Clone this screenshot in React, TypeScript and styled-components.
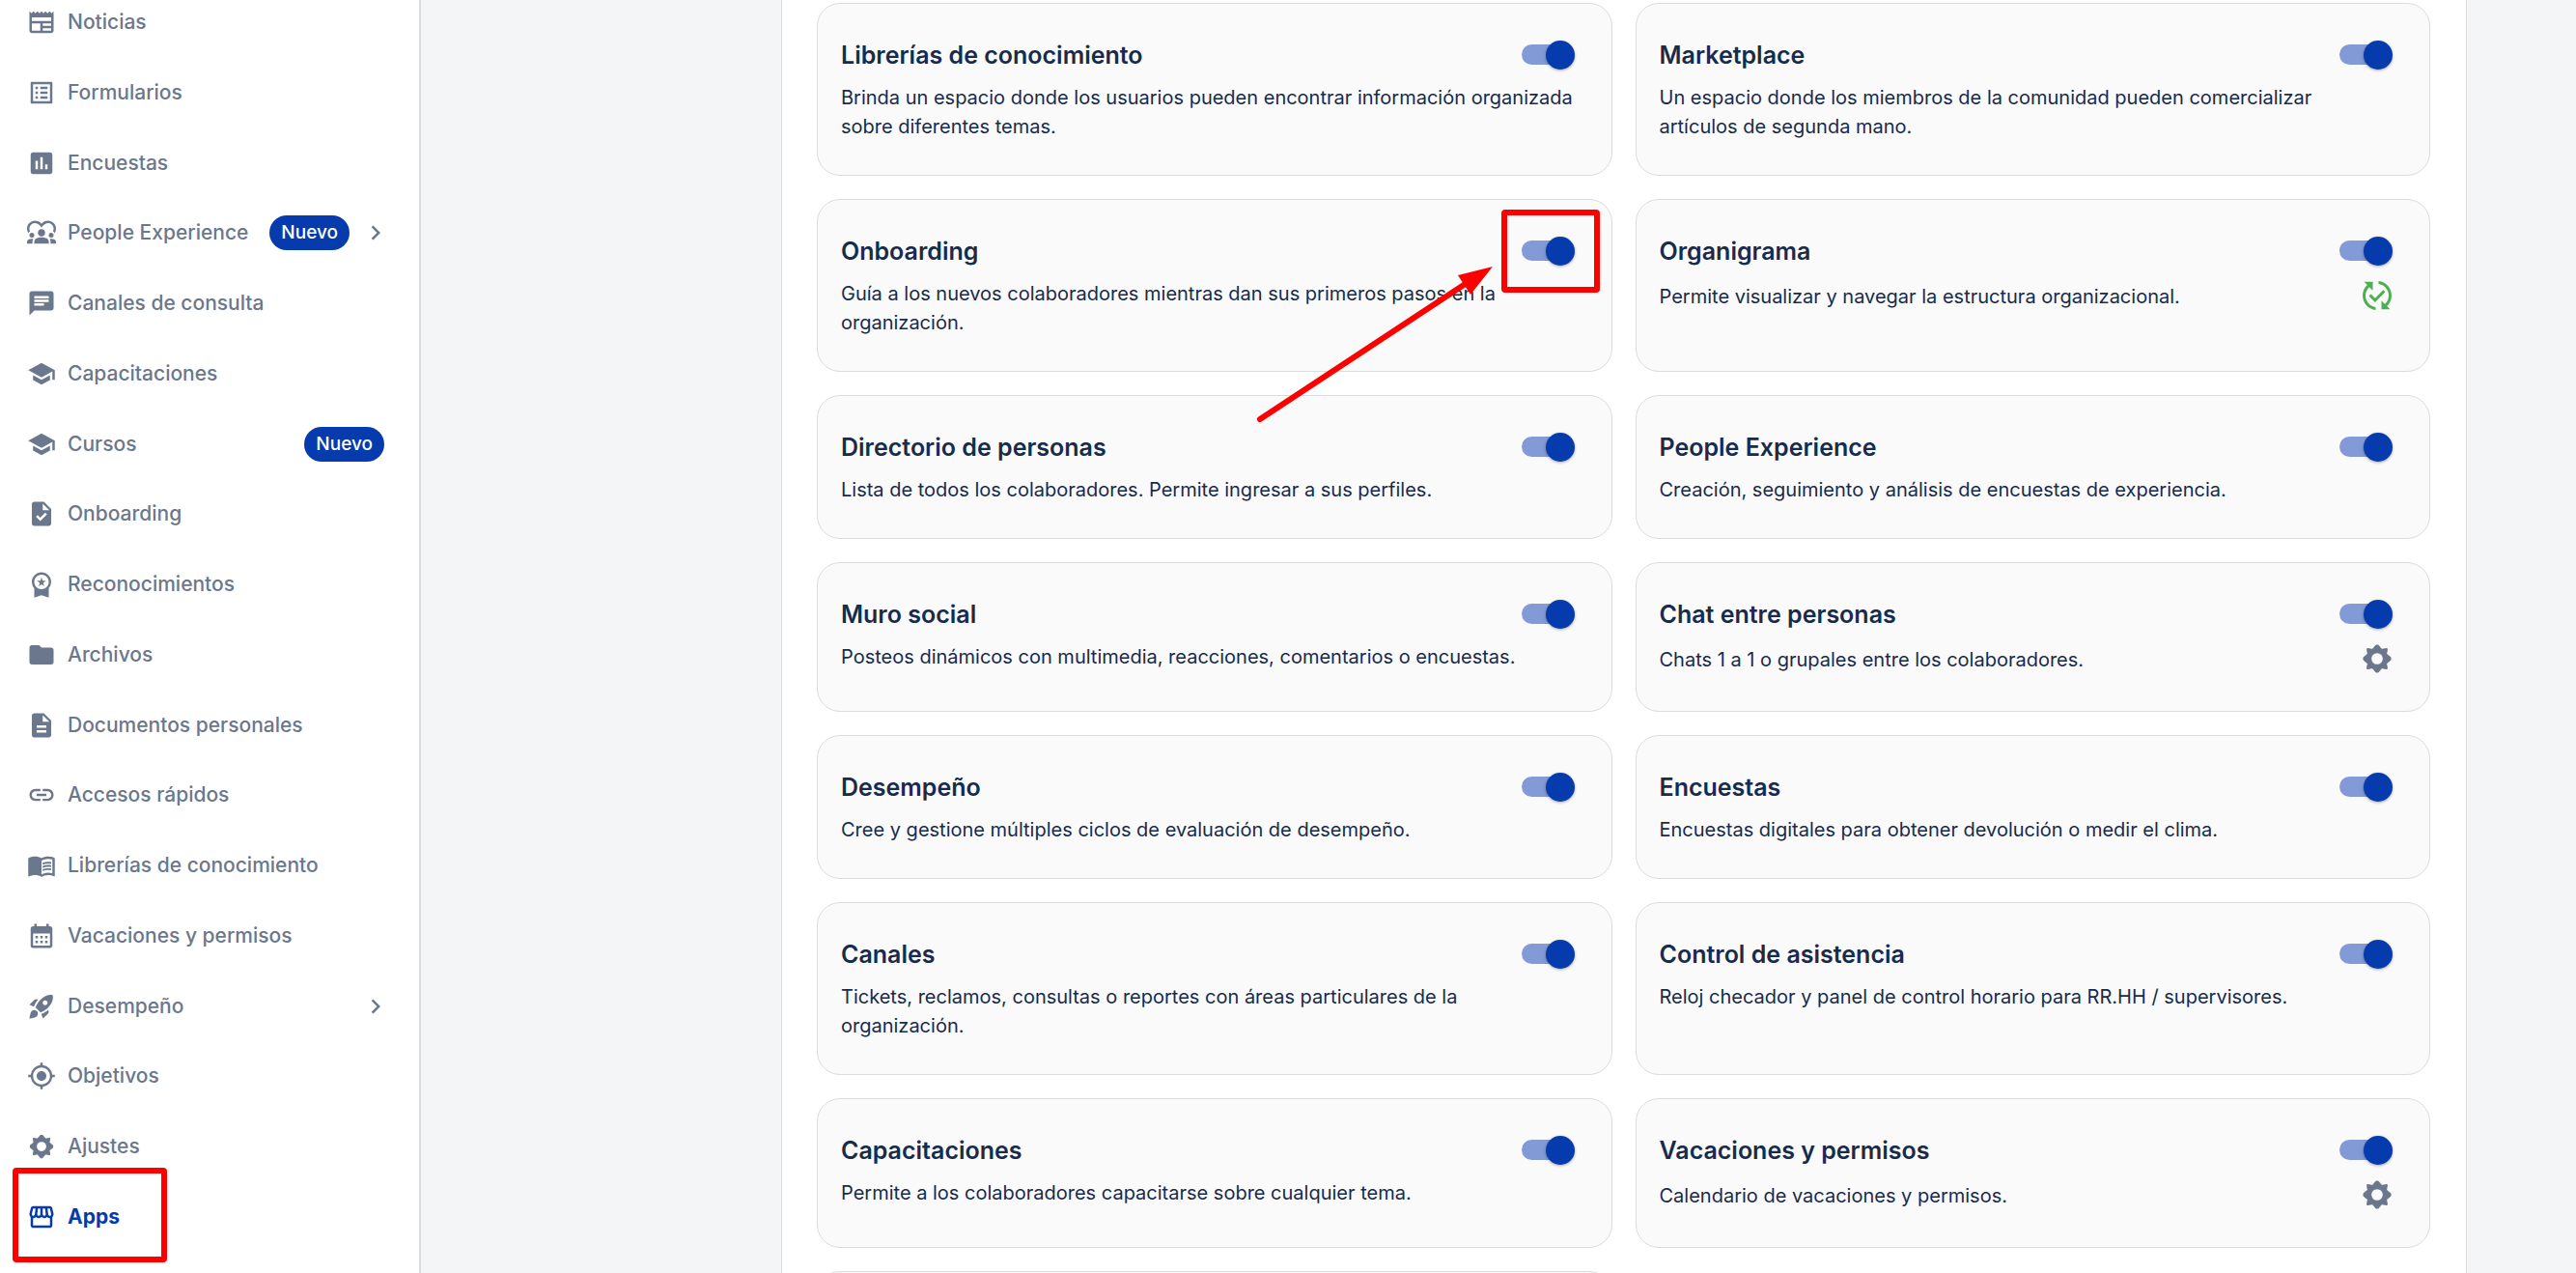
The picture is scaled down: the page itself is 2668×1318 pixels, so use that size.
import React from 'react';
import styled, { createGlobalStyle } from 'styled-components';
import type { IconType } from 'react-icons';
import {
  MdAssessment,
  MdCalendarMonth,
  MdChat,
  MdChevronRight,
  MdDescription,
  MdDiversity1,
  MdFolder,
  MdLink,
  MdListAlt,
  MdMenuBook,
  MdMyLocation,
  MdNewspaper,
  MdPublishedWithChanges,
  MdRocketLaunch,
  MdSchool,
  MdStorefront,
  MdTask,
  MdWorkspacePremium,
} from 'react-icons/md';

const blue = '#053bad';
const slate = '#6b778c';
const navy = '#172b4d';
const line = '#dcdcde';
const red = '#ff0000';

const GlobalStyle = createGlobalStyle`
  *, *::before, *::after { box-sizing: border-box; }
  body {
    margin: 0;
    background: #f4f5f7;
    color: ${navy};
    font-family: Inter, "Liberation Sans", sans-serif;
    overflow: hidden;
  }
`;

const Page = styled.div`
  display: flex;
  height: 100vh;
  overflow: hidden;
`;

const Sidebar = styled.nav`
  flex: none;
  width: 436px;
  height: 100vh;
  background: #fff;
  border-right: 2px solid ${line};
`;

const NavList = styled.ul`
  display: flex;
  flex-direction: column;
  justify-content: space-between;
  height: 100%;
  margin: 0;
  padding: 5px 0 40px;
  list-style: none;
`;

const NavLink = styled.a<{ $active?: boolean; $menu?: boolean }>`
  position: relative;
  display: flex;
  align-items: center;
  gap: 12px;
  height: 36px;
  padding: 0 ${(p) => (p.$menu ? 30 : 36)}px 0 28px;
  color: ${(p) => (p.$active ? blue : slate)};
  font-size: 21px;
  font-weight: ${(p) => (p.$active ? 700 : 500)};
  line-height: 30px;
  text-decoration: none;
  white-space: nowrap;

  svg {
    flex: none;
    width: 30px;
    height: 30px;
  }
`;

const NavText = styled.span`
  flex: 1;
`;

const Badge = styled.span`
  padding: 0 12px;
  border-radius: 18px;
  background: ${blue};
  color: #fff;
  font-size: 19px;
  font-weight: 500;
  line-height: 36px;
`;

const NavMark = styled.span`
  position: absolute;
  left: 13px;
  top: -33px;
  width: 160px;
  height: 98px;
  border: 6px solid ${red};
  border-radius: 4px;
`;

const Main = styled.main`
  flex: 1;
  display: flex;
  padding: 0 113px 0 373px;
`;

const Panel = styled.section`
  flex: 1;
  height: max-content;
  padding: 3px 37px 37px 36px;
  background: #fff;
  border: 1px solid ${line};
  border-width: 0 1px;
`;

const CardGrid = styled.div`
  display: grid;
  grid-template-columns: 1fr 1fr;
  gap: 24px;
`;

const Card = styled.article`
  padding: 24px 24px 36px;
  border: 1px solid ${line};
  border-radius: 24px;
  background: #fafafa;
`;

const CardHeader = styled.label`
  position: relative;
  display: flex;
  align-items: center;
  justify-content: space-between;
  height: 57px;
`;

const CardTitle = styled.span`
  font-size: 25px;
  font-weight: 600;
  line-height: 36px;
`;

const Switch = styled.input`
  appearance: none;
  display: grid;
  align-items: center;
  width: 87px;
  height: 57px;
  margin: 0;
  padding: 0 14px 0 18px;

  &::before,
  &::after {
    content: '';
    grid-area: 1 / 1;
  }
  &::before {
    width: 51px;
    height: 21px;
    border-radius: 11px;
    background: #829bd6;
  }
  &::after {
    width: 30px;
    height: 30px;
    border-radius: 50%;
    background: #8c98ab;
    box-shadow: 0 1px 3px rgba(0, 0, 0, 0.35);
  }
  &:checked::after {
    justify-self: end;
    background: ${blue};
  }
`;

const CardBody = styled.div`
  display: flex;
  align-items: center;
  justify-content: space-between;
  font-size: 20px;
  line-height: 30px;
`;

const Description = styled.p`
  margin: 1px 0 -1px;
  padding-right: 12px;
`;

const CardAction = styled.button<{ $tone: string }>`
  display: flex;
  margin: 0 12px 0 0;
  padding: 0;
  border: 0;
  background: none;
  color: ${(p) => p.$tone};

  svg {
    width: 36px;
    height: 36px;
  }
`;

const SwitchMark = styled.span`
  position: absolute;
  right: -12px;
  top: -14px;
  width: 102px;
  height: 86px;
  border: 6px solid ${red};
  border-radius: 4px;
`;

const Arrow = styled.svg`
  position: absolute;
  right: 99px;
  top: 35px;
  z-index: 1;
  overflow: visible;
`;

function GearIcon() {
  return (
    <svg viewBox="-12 -12 24 24" fill="currentColor" aria-hidden="true">
      <path
        fillRule="evenodd"
        stroke="currentColor"
        strokeWidth="1.600"
        strokeLinejoin="round"
        d="M-.5-8.900H.5L3-5.900 6.500-6.500 5.900-3 8.900-.5V.5L5.900 3 6.500 6.500 3 5.900 .5 8.900H-.5L-3 5.900-6.500 6.500-5.900 3-8.900 .5V-.5L-5.900-3-6.500-6.500-3-5.900ZM-4.700 0a4.700 4.700 0 1 0 9.400 0a4.700 4.700 0 1 0-9.400 0Z"
      />
    </svg>
  );
}

type NavItem = {
  label: string;
  icon: IconType | typeof GearIcon;
  badge?: string;
  menu?: boolean;
  active?: boolean;
};

const navItems: NavItem[] = [
  { label: 'Noticias', icon: MdNewspaper },
  { label: 'Formularios', icon: MdListAlt },
  { label: 'Encuestas', icon: MdAssessment },
  { label: 'People Experience', icon: MdDiversity1, badge: 'Nuevo', menu: true },
  { label: 'Canales de consulta', icon: MdChat },
  { label: 'Capacitaciones', icon: MdSchool },
  { label: 'Cursos', icon: MdSchool, badge: 'Nuevo' },
  { label: 'Onboarding', icon: MdTask },
  { label: 'Reconocimientos', icon: MdWorkspacePremium },
  { label: 'Archivos', icon: MdFolder },
  { label: 'Documentos personales', icon: MdDescription },
  { label: 'Accesos rápidos', icon: MdLink },
  { label: 'Librerías de conocimiento', icon: MdMenuBook },
  { label: 'Vacaciones y permisos', icon: MdCalendarMonth },
  { label: 'Desempeño', icon: MdRocketLaunch, menu: true },
  { label: 'Objetivos', icon: MdMyLocation },
  { label: 'Ajustes', icon: GearIcon },
  { label: 'Apps', icon: MdStorefront, active: true },
];

type AppCard = {
  title: string;
  text: string;
  action?: 'synced' | 'settings';
  marked?: boolean;
};

const cards: AppCard[] = [
  { title: 'Librerías de conocimiento', text: 'Brinda un espacio donde los usuarios pueden encontrar información organizada sobre diferentes temas.' },
  { title: 'Marketplace', text: 'Un espacio donde los miembros de la comunidad pueden comercializar artículos de segunda mano.' },
  { title: 'Onboarding', text: 'Guía a los nuevos colaboradores mientras dan sus primeros pasos en la organización.', marked: true },
  { title: 'Organigrama', text: 'Permite visualizar y navegar la estructura organizacional.', action: 'synced' },
  { title: 'Directorio de personas', text: 'Lista de todos los colaboradores. Permite ingresar a sus perfiles.' },
  { title: 'People Experience', text: 'Creación, seguimiento y análisis de encuestas de experiencia.' },
  { title: 'Muro social', text: 'Posteos dinámicos con multimedia, reacciones, comentarios o encuestas.' },
  { title: 'Chat entre personas', text: 'Chats 1 a 1 o grupales entre los colaboradores.', action: 'settings' },
  { title: 'Desempeño', text: 'Cree y gestione múltiples ciclos de evaluación de desempeño.' },
  { title: 'Encuestas', text: 'Encuestas digitales para obtener devolución o medir el clima.' },
  { title: 'Canales', text: 'Tickets, reclamos, consultas o reportes con áreas particulares de la organización.' },
  { title: 'Control de asistencia', text: 'Reloj checador y panel de control horario para RR.HH / supervisores.' },
  { title: 'Capacitaciones', text: 'Permite a los colaboradores capacitarse sobre cualquier tema.' },
  { title: 'Vacaciones y permisos', text: 'Calendario de vacaciones y permisos.', action: 'settings' },
];

export default function App() {
  return (
    <Page>
      <GlobalStyle />
      <Sidebar>
        <NavList>
          {navItems.map(({ label, icon: Icon, badge, menu, active }) => (
            <li key={label}>
              <NavLink href="#" $active={active} $menu={menu}>
                <Icon />
                <NavText>{label}</NavText>
                {badge && <Badge>{badge}</Badge>}
                {menu && <MdChevronRight />}
                {active && <NavMark />}
              </NavLink>
            </li>
          ))}
        </NavList>
      </Sidebar>
      <Main>
        <Panel>
          <CardGrid>
            {cards.map(({ title, text, action, marked }) => (
              <Card key={title}>
                <CardHeader>
                  <CardTitle>{title}</CardTitle>
                  <Switch type="checkbox" role="switch" defaultChecked />
                  {marked && <SwitchMark />}
                  {marked && (
                    <Arrow width="250" height="170" viewBox="0 0 250 170" aria-hidden="true">
                      <path d="M9 168L220 29" stroke={red} strokeWidth="6" strokeLinecap="round" />
                      <path d="M250 10L214 19L227 39Z" fill={red} />
                    </Arrow>
                  )}
                </CardHeader>
                <CardBody>
                  <Description>{text}</Description>
                  {action === 'synced' && (
                    <CardAction $tone="#4caf50" aria-label="Sincronizado">
                      <MdPublishedWithChanges />
                    </CardAction>
                  )}
                  {action === 'settings' && (
                    <CardAction $tone={slate} aria-label="Configurar">
                      <GearIcon />
                    </CardAction>
                  )}
                </CardBody>
              </Card>
            ))}
            <Card />
          </CardGrid>
        </Panel>
      </Main>
    </Page>
  );
}
